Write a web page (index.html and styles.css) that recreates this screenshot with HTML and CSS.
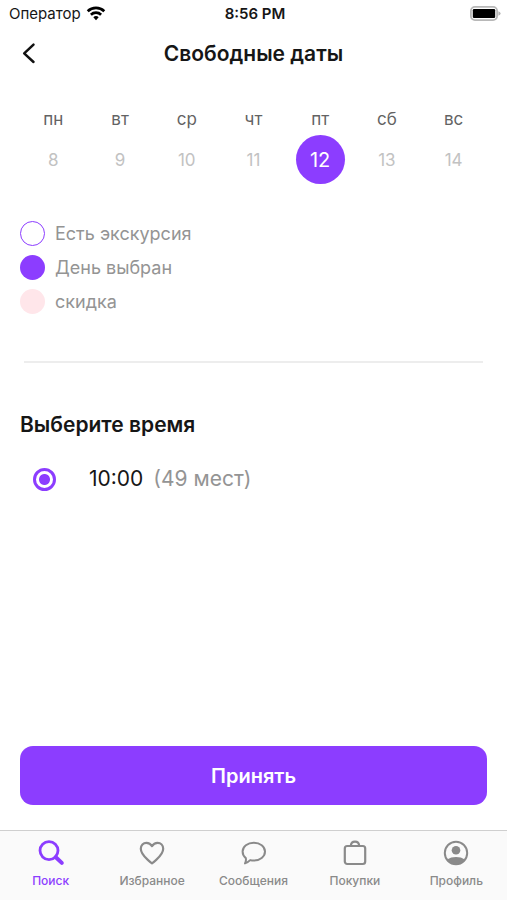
FILE: index.html
```html
<!DOCTYPE html>
<html lang="ru">
<head>
<meta charset="utf-8">
<meta name="viewport" content="width=device-width, initial-scale=1">
<title>Свободные даты</title>
<link rel="stylesheet" href="styles.css">
</head>
<body>
<div class="screen">
  <div class="status">
    <div class="carrier">
      <span>Оператор</span>
      <svg class="wifi" width="20" height="15" viewBox="0 0 20 15" fill="none" stroke="#000" stroke-width="2.7" aria-hidden="true">
        <path d="M1.7 5.2a12 12 0 0 1 16.6 0"/>
        <path d="M4.9 8.7a7.4 7.4 0 0 1 10.2 0"/>
        <path d="M10 14.2l-2.7-2.9a3.9 3.9 0 0 1 5.4 0z" fill="#000" stroke="none"/>
      </svg>
    </div>
    <span class="clock">8:56 PM</span>
    <svg class="battery" width="31" height="15" viewBox="0 0 31 15" aria-hidden="true">
      <rect x="0.9" y="0.9" width="26.2" height="13.2" rx="4" fill="#fff" stroke="#b8b8b8" stroke-width="1.8"/>
      <rect x="2.800" y="3" width="22.400" height="9" rx="1.2" fill="#000"/>
      <path d="M28.4 5.2q2.2.8 2.2 2.3t-2.2 2.3z" fill="#b4b4b4"/>
    </svg>
  </div>

  <header class="header">
    <button class="back" type="button" aria-label="Назад">
      <svg width="14" height="22" viewBox="0 0 14 22" fill="none" stroke="#111" stroke-width="2.5" stroke-linecap="round" stroke-linejoin="round"><path d="M11.500 2.600L2.200 11.400l9.300 8.600"/></svg>
    </button>
    <h1 class="title">Свободные даты</h1>
  </header>

  <main class="content">
    <table class="week">
      <thead>
        <tr><th>пн</th><th>вт</th><th>ср</th><th>чт</th><th>пт</th><th>сб</th><th>вс</th></tr>
      </thead>
      <tbody>
        <tr>
          <td><button class="day" type="button">8</button></td>
          <td><button class="day" type="button">9</button></td>
          <td><button class="day" type="button">10</button></td>
          <td><button class="day" type="button">11</button></td>
          <td><button class="day selected" type="button" aria-pressed="true">12</button></td>
          <td><button class="day" type="button">13</button></td>
          <td><button class="day" type="button">14</button></td>
        </tr>
      </tbody>
    </table>

    <ul class="legend">
      <li><span class="dot available"></span>Есть экскурсия</li>
      <li><span class="dot chosen"></span>День выбран</li>
      <li><span class="dot discount"></span>скидка</li>
    </ul>

    <hr class="divider">

    <h2 class="subtitle">Выберите время</h2>
    <label class="slot">
      <input class="radio" type="radio" name="time" checked>
      <span class="time">10:00</span>
      <span class="seats">(49 мест)</span>
    </label>

    <button class="accept" type="button">Принять</button>
  </main>

  <nav class="tabs">
    <a class="tab active" href="#search" aria-current="page">
      <svg width="28" height="28" viewBox="0 0 28 28" fill="none" stroke="currentColor"><circle cx="12" cy="11.6" r="9" stroke-width="2.8"/><path d="M18.8 18.2l6 5.7" stroke-width="4" stroke-linecap="round"/></svg>
      Поиск
    </a>
    <a class="tab" href="#favorites">
      <svg width="28" height="28" viewBox="0 0 28 28" fill="none" stroke="currentColor" stroke-width="2.2" stroke-linejoin="round"><path d="M14 24.400c-1.100-.7-2.600-2-4.200-3.500C5.700 17.200 2.800 13.800 2.800 9.800 2.800 6.200 5.300 3.800 8.400 3.800c2.300 0 4.300 1.100 5.600 3.300 1.300-2.200 3.300-3.300 5.600-3.300 3.100 0 5.600 2.400 5.600 6 0 4-2.900 7.400-7 11.100-1.600 1.500-3.100 2.800-4.200 3.500z"/></svg>
      Избранное
    </a>
    <a class="tab" href="#messages">
      <svg width="28" height="28" viewBox="0 0 28 28" fill="none" stroke="currentColor" stroke-width="2" stroke-linejoin="round"><path d="M14.800 3.800c6.200 0 11.200 3.800 11.200 8.800s-5 9-11.200 9c-1.300 0-2.500-.2-3.600-.5-1.400 1.400-3.200 2.600-5.200 3.300.9-1.800 1.200-3.600.8-5.300C4.800 17.500 3.600 15.200 3.600 12.600c0-5 5-8.800 11.200-8.800z"/></svg>
      Сообщения
    </a>
    <a class="tab" href="#purchases">
      <svg width="28" height="28" viewBox="0 0 28 28" fill="none" stroke="currentColor" stroke-width="2.2"><rect x="3.800" y="7" width="20.400" height="18" rx="2.400"/><path d="M9.800 6.800C10 4.200 11.700 2.600 14 2.600s4 1.600 4.200 4.200"/></svg>
      Покупки
    </a>
    <a class="tab" href="#profile">
      <svg width="28" height="28" viewBox="0 0 28 28" fill="none" stroke="currentColor" stroke-width="2"><circle cx="14" cy="14" r="11.200"/><circle cx="14" cy="11.300" r="4.300" fill="currentColor" stroke="none"/><path d="M5.200 20.400c2.400-1.700 5.500-2.500 8.800-2.500s6.400.8 8.800 2.500C20.600 23.400 17.500 25 14 25s-6.600-1.600-8.800-4.600z" fill="currentColor" stroke="none"/></svg>
      Профиль
    </a>
  </nav>
</div>
</body>
</html>
```
FILE: styles.css
```css
:root {
  --accent: #8c3dff;
  --muted: #949494;
}

* {
  box-sizing: border-box;
}

body {
  margin: 0;
  background: #fff;
  color: #161616;
  font-family: Inter, "Liberation Sans", sans-serif;
}

button {
  border: 0;
  padding: 0;
  background: none;
  font: inherit;
  color: inherit;
  cursor: pointer;
}

.screen {
  display: flex;
  flex-direction: column;
  min-height: 100vh;
}

.status {
  display: grid;
  grid-template-columns: 1fr auto 1fr;
  align-items: center;
  height: 27px;
  padding: 0 6px 0 9px;
  font-size: 15px;
}

.carrier {
  display: flex;
  align-items: center;
  gap: 5px;
}

.clock {
  font-weight: 600;
}

.battery {
  justify-self: end;
}

.header {
  display: grid;
  grid-template-columns: 40px 1fr 40px;
  align-items: center;
  height: 52px;
  padding: 0 9px;
}

.back {
  display: flex;
  align-items: center;
  justify-content: center;
  height: 44px;
}

.title {
  margin: 0;
  text-align: center;
  font-size: 21px;
  font-weight: 600;
}

.content {
  display: flex;
  flex: 1;
  flex-direction: column;
  padding: 25px 20px;
}

.week {
  width: 100%;
  table-layout: fixed;
  border-collapse: collapse;
}

.week th {
  height: 31px;
  padding: 0;
  vertical-align: top;
  font-size: 17px;
  line-height: 30px;
  font-weight: 400;
  color: #636363;
}

.week td {
  padding: 0;
  text-align: center;
}

.day {
  display: block;
  width: 49px;
  height: 49px;
  margin: 0 auto;
  border-radius: 50%;
  font-size: 17px;
  color: #c2c2c2;
}

.day.selected {
  background: var(--accent);
  font-size: 20px;
  color: #fff;
}

.legend {
  display: grid;
  gap: 9px;
  margin: 37px 0 0;
  padding: 0;
  list-style: none;
  font-size: 18px;
  line-height: 25px;
  color: var(--muted);
}

.legend li {
  display: flex;
  align-items: center;
  gap: 10px;
}

.dot {
  width: 25px;
  height: 25px;
  border-radius: 50%;
}

.available {
  border: 1px solid var(--accent);
}

.chosen {
  background: var(--accent);
}

.discount {
  background: #ffe6ea;
}

.divider {
  align-self: stretch;
  height: 2px;
  margin: 47px 4px 0;
  border: 0;
  background: #ededed;
}

.subtitle {
  margin: 47px 0 0;
  font-size: 21px;
  line-height: 30px;
  font-weight: 600;
}

.slot {
  display: flex;
  align-items: center;
  margin: 24px 0 32px 13px;
  font-size: 21px;
  line-height: 30px;
}

.radio {
  appearance: none;
  width: 23px;
  height: 23px;
  margin: 0;
  border: 3px solid var(--accent);
  border-radius: 50%;
  background: radial-gradient(circle, var(--accent) 5px, #fff 6px);
}

.time {
  margin-left: 33px;
}

.seats {
  margin-left: 10px;
  color: var(--muted);
}

.accept {
  height: 59px;
  margin-top: auto;
  border-radius: 13px;
  background: var(--accent);
  color: #fff;
  font-size: 20px;
  font-weight: 600;
}

.tabs {
  display: grid;
  grid-template-columns: repeat(5, 1fr);
  height: 70px;
  padding-top: 8px;
  border-top: 1px solid #cfcfcf;
  background: #fafafa;
}

.tab {
  display: flex;
  flex-direction: column;
  align-items: center;
  gap: 5px;
  font-size: 12px;
  font-weight: 500;
  line-height: 18px;
  color: #8a8a8a;
  text-decoration: none;
}

.tab.active {
  color: var(--accent);
}
```
